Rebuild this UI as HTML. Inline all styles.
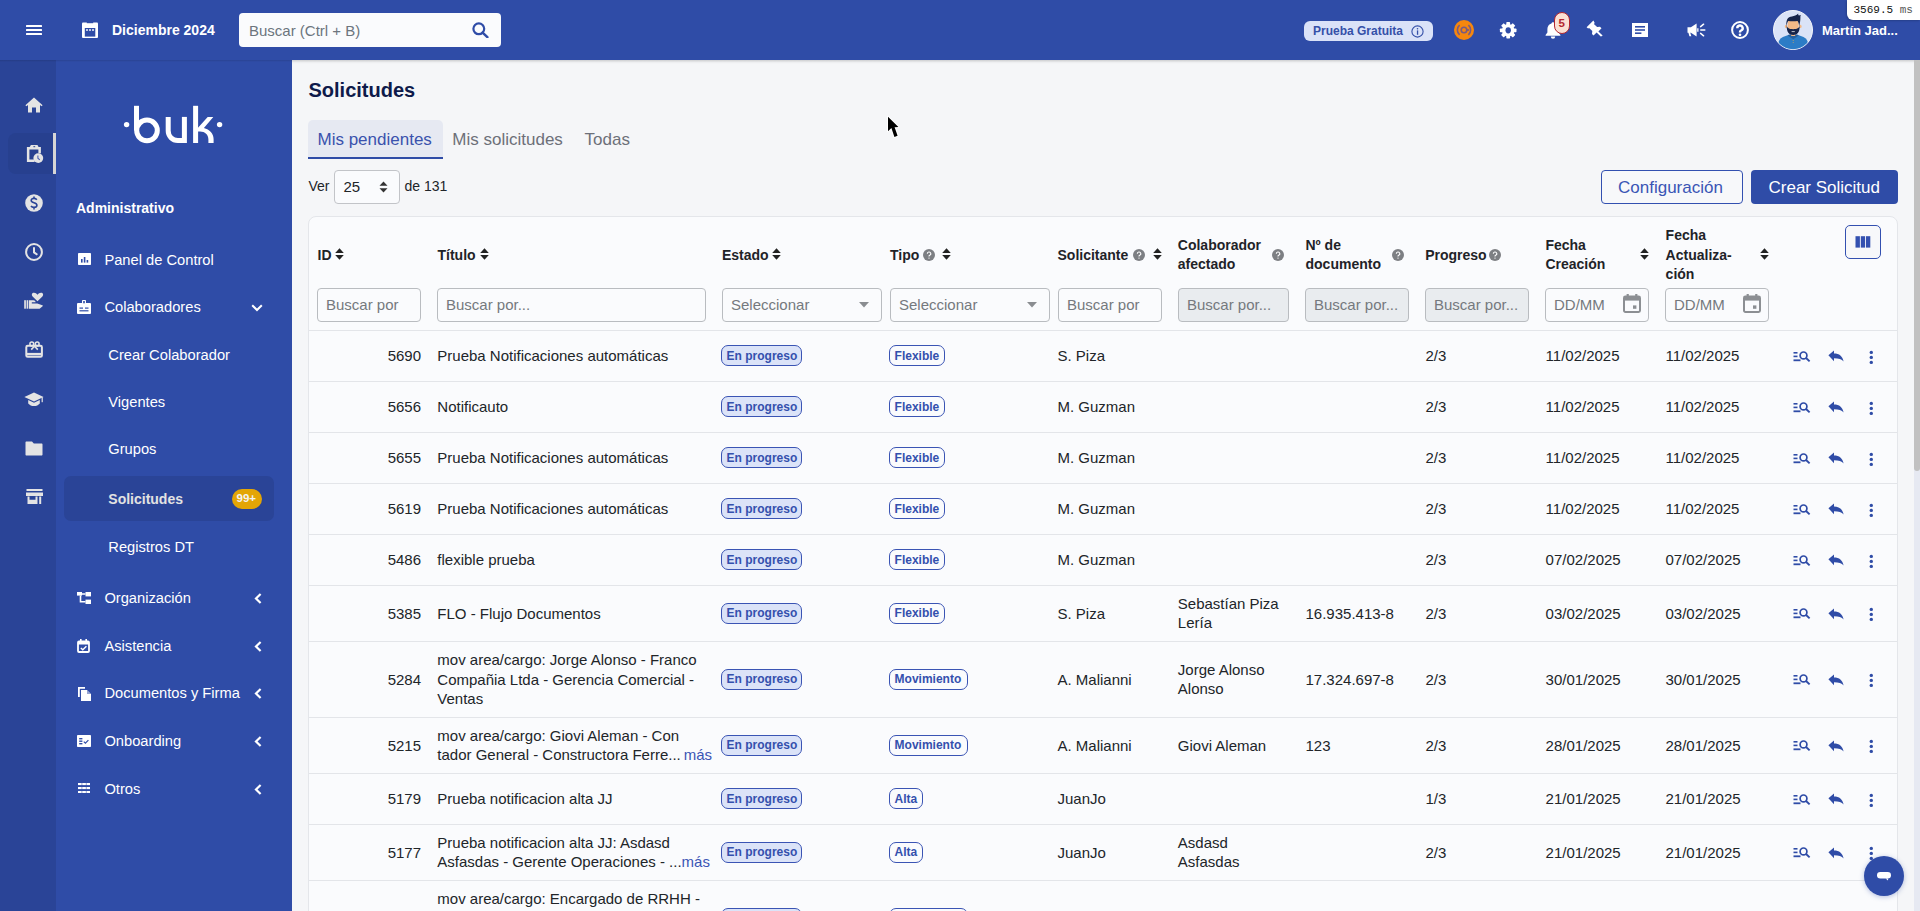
<!DOCTYPE html><html><head><meta charset="utf-8"><title>Solicitudes</title><style>
html,body{margin:0;padding:0;width:1920px;height:911px;overflow:hidden;background:#f5f6f8;font-family:"Liberation Sans",sans-serif;}
.t{position:absolute;white-space:nowrap;}
svg{display:block;}
</style></head><body>
<div style="position:absolute;left:0px;top:0px;width:1920px;height:60px;background:#2f4ca7;"></div>
<div style="position:absolute;left:0px;top:60px;width:56px;height:851px;background:#2a4497;"></div>
<div style="position:absolute;left:56px;top:60px;width:236px;height:851px;background:#2f4ca7;"></div>
<div style="position:absolute;left:0px;top:60px;width:292px;height:2px;background:linear-gradient(rgba(0,0,0,0.12),rgba(0,0,0,0));"></div>
<div style="position:absolute;left:292px;top:60px;width:1622px;height:4px;background:linear-gradient(rgba(0,0,0,0.16),rgba(0,0,0,0.03) 60%,rgba(0,0,0,0));"></div>
<svg style="position:absolute;left:26px;top:24px;" width="16" height="12" viewBox="0 0 16 12"><rect x="0" y="0.9" width="16" height="2.1" rx="0.5" fill="#fff"/><rect x="0" y="4.95" width="16" height="2.1" rx="0.5" fill="#fff"/><rect x="0" y="9" width="16" height="2.1" rx="0.5" fill="#fff"/></svg>
<svg style="position:absolute;left:82px;top:22px;" width="16" height="16" viewBox="0 0 16 16"><rect x="0" y="0.4" width="16" height="15.6" rx="1" fill="#fff"/><rect x="4.8" y="0" width="6.4" height="1.2" fill="#2f4ca7"/><rect x="2.8" y="6" width="10.5" height="8.6" fill="#2f4ca7"/><circle cx="5" cy="8" r="0.95" fill="#fff"/><circle cx="8" cy="8" r="0.95" fill="#fff"/><circle cx="11" cy="8" r="0.95" fill="#fff"/></svg>
<div class="t" style="left:112px;top:23.45px;font-size:14px;line-height:14px;font-weight:700;color:#fff;">Diciembre 2024</div>
<div style="position:absolute;left:239px;top:13px;width:262px;height:34px;background:#fafbfd;border-radius:4px;"></div>
<div class="t" style="left:249px;top:22.80px;font-size:15px;line-height:15px;font-weight:400;color:#6c757d;">Buscar (Ctrl + B)</div>
<svg style="position:absolute;left:472px;top:22px;" width="17" height="16" viewBox="0 0 17 16"><circle cx="6.8" cy="6.8" r="5.4" fill="none" stroke="#2f4ca7" stroke-width="2.2"/><path d="M10.6 10.6L15.4 15.2" stroke="#2f4ca7" stroke-width="2.4" stroke-linecap="round"/></svg>
<div style="position:absolute;left:1304px;top:21px;width:129px;height:20px;background:#dae2f8;border-radius:6px;"></div>
<div class="t" style="left:1313px;top:24.84px;font-size:12px;line-height:12px;font-weight:700;color:#3550a8;">Prueba Gratuita</div>
<svg style="position:absolute;left:1411px;top:25px;" width="13" height="13" viewBox="0 0 13 13"><circle cx="6.5" cy="6.5" r="5.6" fill="none" stroke="#3550a8" stroke-width="1.1"/><rect x="5.9" y="5.4" width="1.3" height="4.4" fill="#3550a8"/><circle cx="6.5" cy="3.7" r="0.8" fill="#3550a8"/></svg>
<svg style="position:absolute;left:1454px;top:20px;" width="20" height="20" viewBox="0 0 20 20"><circle cx="10" cy="10" r="10" fill="#f5870e"/><path d="M5.6 5.2A6.3 6.3 0 0 0 5.6 14.8" fill="none" stroke="#7a5a80" stroke-width="1.6"/><path d="M14.4 5.2A6.3 6.3 0 0 1 14.4 14.8" fill="none" stroke="#7a5a80" stroke-width="1.6"/><circle cx="10" cy="10" r="2.8" fill="none" stroke="#7a5a80" stroke-width="1.6"/><path d="M12.8 10H15" stroke="#7a5a80" stroke-width="1.6"/></svg>
<svg style="position:absolute;left:1499px;top:22px;" width="18" height="17" viewBox="0 0 18 17"><g transform="translate(9.2,8.3)"><rect x="-1.9" y="-8.3" width="3.8" height="4" rx="0.8" fill="#fff" transform="rotate(0)"/><rect x="-1.9" y="-8.3" width="3.8" height="4" rx="0.8" fill="#fff" transform="rotate(45)"/><rect x="-1.9" y="-8.3" width="3.8" height="4" rx="0.8" fill="#fff" transform="rotate(90)"/><rect x="-1.9" y="-8.3" width="3.8" height="4" rx="0.8" fill="#fff" transform="rotate(135)"/><rect x="-1.9" y="-8.3" width="3.8" height="4" rx="0.8" fill="#fff" transform="rotate(180)"/><rect x="-1.9" y="-8.3" width="3.8" height="4" rx="0.8" fill="#fff" transform="rotate(225)"/><rect x="-1.9" y="-8.3" width="3.8" height="4" rx="0.8" fill="#fff" transform="rotate(270)"/><rect x="-1.9" y="-8.3" width="3.8" height="4" rx="0.8" fill="#fff" transform="rotate(315)"/><circle r="6.2" fill="#fff"/><ellipse rx="2.7" ry="3.1" fill="#2f4ca7"/></g></svg>
<svg style="position:absolute;left:1545px;top:21px;" width="16" height="18" viewBox="0 0 16 18"><path d="M8 1.2c.9 0 1.5.6 1.5 1.3 2.6.6 4.1 2.8 4.1 5.6v3.4l1.8 2.4v.9H.6v-.9l1.8-2.4V8.1c0-2.8 1.5-5 4.1-5.6 0-.7.6-1.3 1.5-1.3z" fill="#fff"/><path d="M5.8 15.6h4.4a2.2 2.2 0 0 1-4.4 0z" fill="#fff"/></svg>
<div style="position:absolute;left:1554px;top:12px;width:16px;height:22px;background:#fbe0d4;border:1.3px solid #b3262f;border-radius:8px;box-sizing:border-box;"></div>
<div class="t" style="left:1558.5px;top:17.77px;font-size:11.5px;line-height:11.5px;font-weight:700;color:#b3262f;">5</div>
<svg style="position:absolute;left:1586px;top:20px;" width="17" height="17" viewBox="0 0 17 17"><g transform="translate(17,0) scale(-1,1)"><path d="M9.6 0.4L16.4 7.2 14.9 8.6 13.9 7.9 10.7 11.1 11 14 9.5 15.5 6.4 12.4 2.2 16.6 0.9 16.1 0.4 15.6 4.6 11.4 1.5 8.3 3 6.8 5.9 7.1 9.1 3.9 8.3 2.9z" fill="#fff"/></g></svg>
<svg style="position:absolute;left:1632px;top:23px;" width="16" height="14" viewBox="0 0 16 14"><rect x="0" y="0" width="16" height="14" fill="#fff"/><rect x="3" y="3" width="10" height="1.6" fill="#2f4ca7"/><rect x="3" y="6.2" width="10" height="1.6" fill="#2f4ca7"/><rect x="3" y="9.4" width="6.4" height="1.6" fill="#2f4ca7"/></svg>
<svg style="position:absolute;left:1687px;top:23px;" width="19" height="14" viewBox="0 0 19 14"><path d="M0.5 4.2h3.4L9.6 0.6v12.8L3.9 9.8H3.3l1 3.4H2.4l-1-3.4H.5z" fill="#fff"/><path d="M10.2 5.2h1.3v3.6h-1.3z" fill="#fff"/><path d="M13.6 3.6L16.6 1.2M13.8 7H17.8M13.6 10.4L16.6 12.8" stroke="#fff" stroke-width="1.5" stroke-linecap="round"/></svg>
<svg style="position:absolute;left:1731px;top:21px;" width="18" height="18" viewBox="0 0 18 18"><circle cx="9" cy="9" r="7.9" fill="none" stroke="#fff" stroke-width="2"/><path d="M6.3 7.2a2.7 2.6 0 1 1 3.8 2.3c-.8.4-1.1.8-1.1 1.6v.5" fill="none" stroke="#fff" stroke-width="2.4"/><circle cx="9" cy="13.8" r="1.35" fill="#fff"/></svg>
<svg style="position:absolute;left:1773px;top:10px;" width="40" height="40" viewBox="0 0 40 40"><defs><clipPath id="avc"><circle cx="20" cy="20" r="19.2"/></clipPath></defs><circle cx="20" cy="20" r="19.5" fill="#dae3f7" stroke="#f4f6fb" stroke-width="1"/><g clip-path="url(#avc)"><ellipse cx="20.2" cy="33" rx="14.6" ry="8.6" fill="#2c7cc6"/><path d="M14.6 25.6L20.2 29.2 25.8 25.6 24.4 24.4H16z" fill="#25609e"/><circle cx="20.2" cy="30.6" r="0.5" fill="#c9a35c"/><circle cx="20.2" cy="32.6" r="0.5" fill="#c9a35c"/><rect x="18.2" y="22.6" width="4" height="3.4" fill="#f3b987"/><ellipse cx="13" cy="16.4" rx="1.2" ry="1.6" fill="#f3b987"/><ellipse cx="27.4" cy="16.4" rx="1.2" ry="1.6" fill="#f3b987"/><rect x="14.6" y="9.4" width="11" height="11.5" rx="4" fill="#f3b987"/><path d="M13.6 15.6c0 6.8 2.4 9.4 6.6 9.4s6.6-2.6 6.6-9.4c-.8 2.8-2.6 3.6-6.6 3.6s-5.8-.8-6.6-3.6z" fill="#16244a"/><path d="M13.4 16.4C13 9.6 14.6 6.6 19 6.4c2.4-.6 4.4-1.2 6.2-3-.1 1 .2 1.6.8 2.2.8-.4 1.4-.5 2-.3-.6.6-.8 1.2-.6 2 .1 2.5-.4 5.6-1.2 9-.3-2.6-.8-4.4-1.6-5.4-3 .6-6.6.6-9.4 0-.8 1.2-1.5 3-1.8 5.5z" fill="#16244a"/><path d="M18.6 21.6h3.2" stroke="#e8e8e8" stroke-width="0.8"/></g></svg>
<div class="t" style="left:1822px;top:23.70px;font-size:13px;line-height:13px;font-weight:700;color:#fff;">Martín Jad...</div>
<div style="position:absolute;left:1847px;top:0px;width:73px;height:20px;background:#fff;border-bottom-left-radius:6px;box-shadow:-1px 1px 2px rgba(0,0,0,0.18);"></div>
<div class="t" style="left:1853.5px;top:4.99px;font-size:11px;line-height:11px;font-weight:400;color:#111;font-family:'Liberation Mono',monospace;">3569.5 <span style="color:#555">ms</span></div>
<div style="position:absolute;left:8px;top:133px;width:47px;height:41px;background:#27408f;border-radius:8px 0 0 8px;"></div>
<div style="position:absolute;left:53px;top:133px;width:3px;height:41px;background:#d6d6d6;"></div>
<svg style="position:absolute;left:25px;top:97px;" width="18" height="16" viewBox="0 0 18 16"><path d="M9 0.5L17.6 8.2 16.6 9.3 15 8v7.5H11v-5H7v5H3V8L1.4 9.3.4 8.2z" fill="#e4e4e4"/></svg>
<svg style="position:absolute;left:26px;top:144px;" width="20" height="20" viewBox="0 0 20 20"><path d="M13.65 9.2V4.15H2.15V16.75H8.6" fill="none" stroke="#e4e4e4" stroke-width="2.5"/><path d="M4.9 0.9H11.5L12.8 3.4V4.9H3.5V3.4z" fill="#e4e4e4"/><rect x="7.4" y="2.2" width="1.8" height="1" fill="#27408f"/><circle cx="12.3" cy="14.1" r="4.9" fill="#e4e4e4"/><path d="M11.9 11.4v2.8l1.9 1.7" fill="none" stroke="#4a5fb0" stroke-width="1.1"/></svg>
<svg style="position:absolute;left:25px;top:194px;" width="18" height="18" viewBox="0 0 18 18"><circle cx="9" cy="9" r="8.8" fill="#e4e4e4"/><path d="M11.8 5.7c-.6-.9-1.6-1.3-2.8-1.3-1.6 0-2.8.8-2.8 2.1 0 2.9 5.7 1.7 5.7 4.7 0 1.4-1.3 2.2-2.9 2.2-1.3 0-2.4-.5-3-1.4M9 2.6v2M9 13.4v2" fill="none" stroke="#2a4497" stroke-width="1.6"/></svg>
<svg style="position:absolute;left:25px;top:243px;" width="18" height="18" viewBox="0 0 18 18"><circle cx="9" cy="9" r="7.9" fill="none" stroke="#e4e4e4" stroke-width="2"/><path d="M9 4.3V9.4l3.4 2.4" fill="none" stroke="#e4e4e4" stroke-width="2"/></svg>
<svg style="position:absolute;left:20px;top:288px;" width="28" height="74" viewBox="0 0 28 74"><path d="M17.5 13.2L12.6 8.4C11.2 6.9 11.9 4.8 14 4.8 15.4 4.8 16.7 5.6 17.5 6.7 18.3 5.6 19.6 4.8 21 4.8 23.1 4.8 23.8 6.9 22.4 8.4Z" fill="#e4e4e4"/><rect x="4.2" y="12.2" width="1.7" height="8.5" fill="#e4e4e4"/><rect x="6.6" y="12.2" width="1.6" height="8.5" fill="#e4e4e4"/><path d="M8.9 12.2H13.4C14.6 12.2 15.6 13 15.6 14.2H11.8V15.5H17.3L21.6 16.9C22.6 17.2 23.2 17.7 22.9 18.1L19.6 20.7H8.9Z" fill="#e4e4e4"/><rect x="6.3" y="57.8" width="15.6" height="11" rx="1.4" fill="none" stroke="#e4e4e4" stroke-width="2"/><rect x="6.3" y="64.9" width="15.6" height="2.4" fill="#e4e4e4"/><circle cx="11.8" cy="56" r="1.9" fill="none" stroke="#e4e4e4" stroke-width="1.5"/><circle cx="17.2" cy="56" r="1.9" fill="none" stroke="#e4e4e4" stroke-width="1.5"/><path d="M14.5 58.2L11.2 61.6M14.5 58.2L17.8 61.6" stroke="#e4e4e4" stroke-width="1.6"/></svg>
<svg style="position:absolute;left:24px;top:392px;" width="20" height="15" viewBox="0 0 20 15"><path d="M10 0.4L19.6 5 10 9.6.4 5z" fill="#e4e4e4"/><path d="M4.2 8v3.4c1.4 1.6 3.4 2.6 5.8 2.6s4.4-1 5.8-2.6V8L10 10.8z" fill="#e4e4e4"/><rect x="17.6" y="5.2" width="1.2" height="5" fill="#e4e4e4"/></svg>
<svg style="position:absolute;left:25px;top:441px;" width="18" height="15" viewBox="0 0 18 15"><path d="M1.5 0.5h5.5l1.8 2H16.5c.6 0 1 .4 1 1V13.5c0 .6-.4 1-1 1h-15c-.6 0-1-.4-1-1v-12c0-.6.4-1 1-1z" fill="#e4e4e4"/></svg>
<svg style="position:absolute;left:26px;top:489px;" width="17" height="15" viewBox="0 0 17 15"><rect x="0.5" y="0" width="16" height="2" fill="#e4e4e4"/><path d="M0 3.5h17L17 7H0z" fill="#e4e4e4"/><path d="M1.5 7.5h2v3.2h6V7.5h2v7.5H1.5z" fill="#e4e4e4"/><rect x="13.2" y="7.5" width="2" height="7.5" fill="#e4e4e4"/></svg>
<svg style="position:absolute;left:110px;top:90px;" width="130" height="70" viewBox="0 0 130 70"><g transform="translate(-110,-90)" fill="none" stroke="#fff" stroke-width="5"><circle cx="126.6" cy="124.6" r="2.7" fill="#fff" stroke="none"/><circle cx="219.6" cy="124.6" r="2.7" fill="#fff" stroke="none"/><path d="M136.5 105.8V130.5"/><circle cx="147" cy="130.4" r="10.3"/><path d="M168.2 116.9V130.8A9.6 9.6 0 0 0 177.8 140.5H184.4"/><path d="M184.4 116.9V143"/><path d="M195.6 105.8V143"/><path d="M198 127.7L207.7 116.9H213.3L203.9 127.9C209.6 129.3 213.6 133.4 213.6 139V143H208.4V139.6C208.4 134.6 205 131.6 200 131.6H198Z" fill="#fff" stroke="none"/></g></svg>
<div class="t" style="left:76px;top:201.05px;font-size:14px;line-height:14px;font-weight:700;color:#fff;">Administrativo</div>
<svg style="position:absolute;left:78px;top:253px;" width="13" height="12" viewBox="0 0 13 12"><rect x="0" y="0" width="13" height="12" rx="0.8" fill="#fff"/><rect x="3" y="6" width="1.6" height="3.6" fill="#2f4ca7"/><rect x="5.8" y="4" width="1.6" height="5.6" fill="#2f4ca7"/><rect x="8.6" y="7" width="1.6" height="2.6" fill="#2f4ca7"/></svg>
<div class="t" style="left:104.4px;top:252.56px;font-size:14.7px;line-height:14.7px;font-weight:400;color:#ffffff;">Panel de Control</div>
<svg style="position:absolute;left:77px;top:300px;" width="14" height="14" viewBox="0 0 14 14"><rect x="0" y="3" width="14" height="11" rx="1" fill="#fff"/><rect x="5" y="0" width="4" height="4.5" rx="0.8" fill="#fff"/><rect x="6.2" y="1" width="1.6" height="2.3" fill="#2f4ca7"/><rect x="2.5" y="7.5" width="3.5" height="1.2" fill="#2f4ca7"/><rect x="8" y="7.5" width="3.5" height="1.2" fill="#2f4ca7"/><rect x="2.5" y="10.2" width="9" height="1.2" fill="#2f4ca7"/></svg>
<div class="t" style="left:104.4px;top:299.56px;font-size:14.7px;line-height:14.7px;font-weight:400;color:#ffffff;">Colaboradores</div>
<svg style="position:absolute;left:251px;top:304px;" width="12" height="8" viewBox="0 0 12 8"><path d="M1.2 1.2L6 6 10.8 1.2" fill="none" stroke="#fff" stroke-width="2"/></svg>
<div class="t" style="left:108.3px;top:347.56px;font-size:14.7px;line-height:14.7px;font-weight:400;color:#ffffff;">Crear Colaborador</div>
<div class="t" style="left:108.3px;top:394.56px;font-size:14.7px;line-height:14.7px;font-weight:400;color:#ffffff;">Vigentes</div>
<div class="t" style="left:108.3px;top:442.06px;font-size:14.7px;line-height:14.7px;font-weight:400;color:#ffffff;">Grupos</div>
<div style="position:absolute;left:64px;top:476px;width:210px;height:45px;background:#2a4497;border-radius:7px;"></div>
<div class="t" style="left:108.3px;top:491.55px;font-size:14px;line-height:14px;font-weight:700;color:#e2e2e2;">Solicitudes</div>
<div style="position:absolute;left:232px;top:489px;width:30px;height:20px;background:#e3a506;border-radius:10px;"></div>
<div class="t" style="left:236.5px;top:493.27px;font-size:11.5px;line-height:11.5px;font-weight:700;color:#f4f4f4;">99+</div>
<div class="t" style="left:108.3px;top:539.96px;font-size:14.7px;line-height:14.7px;font-weight:400;color:#ffffff;">Registros DT</div>
<svg style="position:absolute;left:77px;top:592px;" width="14" height="12" viewBox="0 0 14 12"><rect x="0" y="0" width="5" height="3.6" fill="#fff"/><rect x="8.5" y="0" width="5.5" height="4.4" fill="#fff"/><rect x="8.5" y="7.6" width="5.5" height="4.4" fill="#fff"/><path d="M3.5 3.6V9.8H8.5M3.5 2H8.5" fill="none" stroke="#fff" stroke-width="1.6"/></svg>
<div class="t" style="left:104.4px;top:590.96px;font-size:14.7px;line-height:14.7px;font-weight:400;color:#ffffff;">Organización</div>
<svg style="position:absolute;left:254px;top:593px;" width="8" height="11" viewBox="0 0 8 11"><path d="M6.6 1L2 5.5 6.6 10" fill="none" stroke="#fff" stroke-width="2.2"/></svg>
<svg style="position:absolute;left:77px;top:639px;" width="13" height="14" viewBox="0 0 13 14"><rect x="1" y="2.5" width="11" height="10.5" rx="1" fill="none" stroke="#fff" stroke-width="1.8"/><rect x="1" y="2.5" width="11" height="3" fill="#fff"/><rect x="3" y="0" width="1.6" height="3" fill="#fff"/><rect x="8.4" y="0" width="1.6" height="3" fill="#fff"/><path d="M3.8 9l2 1.8 3.6-3.6" fill="none" stroke="#fff" stroke-width="1.4"/></svg>
<div class="t" style="left:104.4px;top:639.16px;font-size:14.7px;line-height:14.7px;font-weight:400;color:#ffffff;">Asistencia</div>
<svg style="position:absolute;left:254px;top:641px;" width="8" height="11" viewBox="0 0 8 11"><path d="M6.6 1L2 5.5 6.6 10" fill="none" stroke="#fff" stroke-width="2.2"/></svg>
<svg style="position:absolute;left:77px;top:686px;" width="14" height="15" viewBox="0 0 14 15"><path d="M1 1h7v1.8H2.8V11H1z" fill="#fff"/><path d="M4 4h6l4 4v7H4z" fill="#fff"/><path d="M10 4v4h4" fill="#2f4ca7" opacity="0.5"/></svg>
<div class="t" style="left:104.4px;top:686.06px;font-size:14.7px;line-height:14.7px;font-weight:400;color:#ffffff;">Documentos y Firma</div>
<svg style="position:absolute;left:254px;top:688px;" width="8" height="11" viewBox="0 0 8 11"><path d="M6.6 1L2 5.5 6.6 10" fill="none" stroke="#fff" stroke-width="2.2"/></svg>
<svg style="position:absolute;left:77px;top:735px;" width="14" height="12" viewBox="0 0 14 12"><rect x="0" y="0" width="14" height="12" rx="0.8" fill="#fff"/><rect x="2.2" y="3" width="3.2" height="1.4" fill="#2f4ca7"/><rect x="2.2" y="5.5" width="3.2" height="1.4" fill="#2f4ca7"/><rect x="2.2" y="8" width="3.2" height="1.4" fill="#2f4ca7"/><path d="M6.8 6.6l1.6 1.5 3-3" fill="none" stroke="#2f4ca7" stroke-width="1.2"/></svg>
<div class="t" style="left:104.4px;top:733.56px;font-size:14.7px;line-height:14.7px;font-weight:400;color:#ffffff;">Onboarding</div>
<svg style="position:absolute;left:254px;top:736px;" width="8" height="11" viewBox="0 0 8 11"><path d="M6.6 1L2 5.5 6.6 10" fill="none" stroke="#fff" stroke-width="2.2"/></svg>
<svg style="position:absolute;left:78px;top:783px;" width="12" height="10" viewBox="0 0 12 10"><rect x="0.0" y="0.0" width="3.7" height="2.1" fill="#fff"/><rect x="4.2" y="0.0" width="3.7" height="2.1" fill="#fff"/><rect x="8.4" y="0.0" width="3.7" height="2.1" fill="#fff"/><rect x="0.0" y="4.0" width="3.7" height="2.1" fill="#fff"/><rect x="4.2" y="4.0" width="3.7" height="2.1" fill="#fff"/><rect x="8.4" y="4.0" width="3.7" height="2.1" fill="#fff"/><rect x="0.0" y="8.0" width="3.7" height="2.1" fill="#fff"/><rect x="4.2" y="8.0" width="3.7" height="2.1" fill="#fff"/><rect x="8.4" y="8.0" width="3.7" height="2.1" fill="#fff"/></svg>
<div class="t" style="left:104.4px;top:781.96px;font-size:14.7px;line-height:14.7px;font-weight:400;color:#ffffff;">Otros</div>
<svg style="position:absolute;left:254px;top:784px;" width="8" height="11" viewBox="0 0 8 11"><path d="M6.6 1L2 5.5 6.6 10" fill="none" stroke="#fff" stroke-width="2.2"/></svg>
<div class="t" style="left:308.5px;top:80.07px;font-size:20px;line-height:20px;font-weight:700;color:#0e1a4a;">Solicitudes</div>
<div style="position:absolute;left:308px;top:120px;width:135px;height:37px;background:#e6e9f2;border-radius:5px 5px 0 0;"></div>
<div style="position:absolute;left:308px;top:157px;width:135px;height:2px;background:#2f4ca7;"></div>
<div class="t" style="left:317.5px;top:130.91px;font-size:17px;line-height:17px;font-weight:400;color:#3a52ad;">Mis pendientes</div>
<div class="t" style="left:452.3px;top:130.91px;font-size:17px;line-height:17px;font-weight:400;color:#6d7079;">Mis solicitudes</div>
<div class="t" style="left:584.6px;top:130.91px;font-size:17px;line-height:17px;font-weight:400;color:#6d7079;">Todas</div>
<div class="t" style="left:308.5px;top:179.15px;font-size:14px;line-height:14px;font-weight:400;color:#212529;">Ver</div>
<div style="position:absolute;left:334px;top:170px;width:66px;height:34px;background:#fafbfd;border:1px solid #c2c4c8;border-radius:4px;box-sizing:border-box;"></div>
<div class="t" style="left:343.5px;top:179.30px;font-size:15px;line-height:15px;font-weight:400;color:#212529;">25</div>
<svg style="position:absolute;left:379px;top:181px;" width="9" height="12" viewBox="0 0 9 12"><path d="M4.5 0.5L8.5 4.8H.5z M4.5 11.5L8.5 7.2H.5z" fill="#333"/></svg>
<div class="t" style="left:404.5px;top:179.15px;font-size:14px;line-height:14px;font-weight:400;color:#212529;">de 131</div>
<div style="position:absolute;left:1601px;top:170px;width:142px;height:34px;border:1px solid #3350b0;border-radius:4px;box-sizing:border-box;background:#f7f8fa;"></div>
<div class="t" style="left:1618px;top:179.21px;font-size:17px;line-height:17px;font-weight:400;color:#3a55b5;">Configuración</div>
<div style="position:absolute;left:1751px;top:170px;width:147px;height:34px;background:#2f4ca7;border-radius:4px;"></div>
<div class="t" style="left:1768.5px;top:179.21px;font-size:17px;line-height:17px;font-weight:400;color:#fff;">Crear Solicitud</div>
<div style="position:absolute;left:308px;top:216px;width:1590px;height:760px;background:#fafbfd;border:1px solid #e4e6ea;border-radius:8px;box-sizing:border-box;"></div>
<div style="position:absolute;left:1845px;top:225px;width:36px;height:34px;border:1px solid #3350b0;border-radius:5px;box-sizing:border-box;background:#f7f8fa;"></div>
<svg style="position:absolute;left:1855px;top:236px;" width="16" height="12" viewBox="0 0 16 12"><rect x="0.5" y="0.2" width="4.4" height="11.4" fill="#3350b0"/><rect x="5.8" y="0.2" width="4.2" height="11.4" fill="#3350b0"/><rect x="10.9" y="0.2" width="4.4" height="11.4" fill="#3350b0"/></svg>
<div class="t" style="left:317.5px;top:248.15px;font-size:14px;line-height:14px;font-weight:700;color:#1f2328;">ID</div>
<svg style="position:absolute;left:334.5px;top:248px;" width="9" height="12" viewBox="0 0 9 12"><path d="M4.5 0.3L8.8 5H.2z M4.5 11.7L8.8 7H.2z" fill="#222"/></svg>
<div class="t" style="left:437.5px;top:248.15px;font-size:14px;line-height:14px;font-weight:700;color:#1f2328;">Título</div>
<svg style="position:absolute;left:479.5px;top:248px;" width="9" height="12" viewBox="0 0 9 12"><path d="M4.5 0.3L8.8 5H.2z M4.5 11.7L8.8 7H.2z" fill="#222"/></svg>
<div class="t" style="left:722px;top:248.15px;font-size:14px;line-height:14px;font-weight:700;color:#1f2328;">Estado</div>
<svg style="position:absolute;left:772px;top:248px;" width="9" height="12" viewBox="0 0 9 12"><path d="M4.5 0.3L8.8 5H.2z M4.5 11.7L8.8 7H.2z" fill="#222"/></svg>
<div class="t" style="left:890px;top:248.15px;font-size:14px;line-height:14px;font-weight:700;color:#1f2328;">Tipo</div>
<svg style="position:absolute;left:922.5px;top:248.7px;" width="12" height="12" viewBox="0 0 12 12"><circle cx="6" cy="6" r="6" fill="#7d7f83"/><path d="M4.3 4.7a1.75 1.7 0 1 1 2.4 1.6c-.5.2-.7.5-.7 1v.3" fill="none" stroke="#fff" stroke-width="1.1"/><circle cx="6" cy="9.1" r="0.7" fill="#fff"/></svg>
<svg style="position:absolute;left:942px;top:248px;" width="9" height="12" viewBox="0 0 9 12"><path d="M4.5 0.3L8.8 5H.2z M4.5 11.7L8.8 7H.2z" fill="#222"/></svg>
<div class="t" style="left:1057.5px;top:248.15px;font-size:14px;line-height:14px;font-weight:700;color:#1f2328;">Solicitante</div>
<svg style="position:absolute;left:1132.5px;top:248.7px;" width="12" height="12" viewBox="0 0 12 12"><circle cx="6" cy="6" r="6" fill="#7d7f83"/><path d="M4.3 4.7a1.75 1.7 0 1 1 2.4 1.6c-.5.2-.7.5-.7 1v.3" fill="none" stroke="#fff" stroke-width="1.1"/><circle cx="6" cy="9.1" r="0.7" fill="#fff"/></svg>
<svg style="position:absolute;left:1152.5px;top:248px;" width="9" height="12" viewBox="0 0 9 12"><path d="M4.5 0.3L8.8 5H.2z M4.5 11.7L8.8 7H.2z" fill="#222"/></svg>
<div class="t" style="left:1177.8px;top:238.15px;font-size:14px;line-height:14px;font-weight:700;color:#1f2328;">Colaborador</div>
<div class="t" style="left:1177.8px;top:256.65px;font-size:14px;line-height:14px;font-weight:700;color:#1f2328;">afectado</div>
<svg style="position:absolute;left:1271.5px;top:248.89999999999998px;" width="12" height="12" viewBox="0 0 12 12"><circle cx="6" cy="6" r="6" fill="#7d7f83"/><path d="M4.3 4.7a1.75 1.7 0 1 1 2.4 1.6c-.5.2-.7.5-.7 1v.3" fill="none" stroke="#fff" stroke-width="1.1"/><circle cx="6" cy="9.1" r="0.7" fill="#fff"/></svg>
<div class="t" style="left:1305.5px;top:238.15px;font-size:14px;line-height:14px;font-weight:700;color:#1f2328;">Nº de</div>
<div class="t" style="left:1305.5px;top:256.65px;font-size:14px;line-height:14px;font-weight:700;color:#1f2328;">documento</div>
<svg style="position:absolute;left:1391.5px;top:248.89999999999998px;" width="12" height="12" viewBox="0 0 12 12"><circle cx="6" cy="6" r="6" fill="#7d7f83"/><path d="M4.3 4.7a1.75 1.7 0 1 1 2.4 1.6c-.5.2-.7.5-.7 1v.3" fill="none" stroke="#fff" stroke-width="1.1"/><circle cx="6" cy="9.1" r="0.7" fill="#fff"/></svg>
<div class="t" style="left:1425.2px;top:248.15px;font-size:14px;line-height:14px;font-weight:700;color:#1f2328;">Progreso</div>
<svg style="position:absolute;left:1488.5px;top:248.7px;" width="12" height="12" viewBox="0 0 12 12"><circle cx="6" cy="6" r="6" fill="#7d7f83"/><path d="M4.3 4.7a1.75 1.7 0 1 1 2.4 1.6c-.5.2-.7.5-.7 1v.3" fill="none" stroke="#fff" stroke-width="1.1"/><circle cx="6" cy="9.1" r="0.7" fill="#fff"/></svg>
<div class="t" style="left:1545.4px;top:238.15px;font-size:14px;line-height:14px;font-weight:700;color:#1f2328;">Fecha</div>
<div class="t" style="left:1545.4px;top:256.95px;font-size:14px;line-height:14px;font-weight:700;color:#1f2328;">Creación</div>
<svg style="position:absolute;left:1640px;top:248px;" width="9" height="12" viewBox="0 0 9 12"><path d="M4.5 0.3L8.8 5H.2z M4.5 11.7L8.8 7H.2z" fill="#222"/></svg>
<div class="t" style="left:1665.6px;top:228.35px;font-size:14px;line-height:14px;font-weight:700;color:#1f2328;">Fecha</div>
<div class="t" style="left:1665.6px;top:248.15px;font-size:14px;line-height:14px;font-weight:700;color:#1f2328;">Actualiza-</div>
<div class="t" style="left:1665.6px;top:266.85px;font-size:14px;line-height:14px;font-weight:700;color:#1f2328;">ción</div>
<svg style="position:absolute;left:1760px;top:248px;" width="9" height="12" viewBox="0 0 9 12"><path d="M4.5 0.3L8.8 5H.2z M4.5 11.7L8.8 7H.2z" fill="#222"/></svg>
<div style="position:absolute;left:317px;top:288px;width:104px;height:34px;background:#fafbfd;border:1px solid #b9bcc0;border-radius:4px;box-sizing:border-box;"></div>
<div class="t" style="left:326px;top:296.70px;font-size:15px;line-height:15px;font-weight:400;color:#75797e;">Buscar por</div>
<div style="position:absolute;left:437px;top:288px;width:269px;height:34px;background:#fafbfd;border:1px solid #b9bcc0;border-radius:4px;box-sizing:border-box;"></div>
<div class="t" style="left:446px;top:296.70px;font-size:15px;line-height:15px;font-weight:400;color:#75797e;">Buscar por...</div>
<div style="position:absolute;left:722px;top:288px;width:160px;height:34px;background:#fafbfd;border:1px solid #b9bcc0;border-radius:4px;box-sizing:border-box;"></div>
<div class="t" style="left:731px;top:296.70px;font-size:15px;line-height:15px;font-weight:400;color:#75797e;">Seleccionar</div>
<svg style="position:absolute;left:859px;top:302px;" width="10" height="6" viewBox="0 0 10 6"><path d="M0 0h10L5 5.5z" fill="#8a8d91"/></svg>
<div style="position:absolute;left:890px;top:288px;width:160px;height:34px;background:#fafbfd;border:1px solid #b9bcc0;border-radius:4px;box-sizing:border-box;"></div>
<div class="t" style="left:899px;top:296.70px;font-size:15px;line-height:15px;font-weight:400;color:#75797e;">Seleccionar</div>
<svg style="position:absolute;left:1027px;top:302px;" width="10" height="6" viewBox="0 0 10 6"><path d="M0 0h10L5 5.5z" fill="#8a8d91"/></svg>
<div style="position:absolute;left:1058px;top:288px;width:104px;height:34px;background:#fafbfd;border:1px solid #b9bcc0;border-radius:4px;box-sizing:border-box;"></div>
<div class="t" style="left:1067px;top:296.70px;font-size:15px;line-height:15px;font-weight:400;color:#75797e;">Buscar por</div>
<div style="position:absolute;left:1178px;top:288px;width:111px;height:34px;background:#e9ecef;border:1px solid #b9bcc0;border-radius:4px;box-sizing:border-box;"></div>
<div class="t" style="left:1187px;top:296.70px;font-size:15px;line-height:15px;font-weight:400;color:#75797e;">Buscar por...</div>
<div style="position:absolute;left:1305px;top:288px;width:104px;height:34px;background:#e9ecef;border:1px solid #b9bcc0;border-radius:4px;box-sizing:border-box;"></div>
<div class="t" style="left:1314px;top:296.70px;font-size:15px;line-height:15px;font-weight:400;color:#75797e;">Buscar por...</div>
<div style="position:absolute;left:1425px;top:288px;width:104px;height:34px;background:#e9ecef;border:1px solid #b9bcc0;border-radius:4px;box-sizing:border-box;"></div>
<div class="t" style="left:1434px;top:296.70px;font-size:15px;line-height:15px;font-weight:400;color:#75797e;">Buscar por...</div>
<div style="position:absolute;left:1545px;top:288px;width:104px;height:34px;background:#fafbfd;border:1px solid #b9bcc0;border-radius:4px;box-sizing:border-box;"></div>
<div class="t" style="left:1554px;top:296.70px;font-size:15px;line-height:15px;font-weight:400;color:#75797e;">DD/MM</div>
<div style="position:absolute;left:1665px;top:288px;width:104px;height:34px;background:#fafbfd;border:1px solid #b9bcc0;border-radius:4px;box-sizing:border-box;"></div>
<div class="t" style="left:1674px;top:296.70px;font-size:15px;line-height:15px;font-weight:400;color:#75797e;">DD/MM</div>
<svg style="position:absolute;left:1623px;top:294px;" width="18" height="19" viewBox="0 0 18 19"><rect x="1" y="2.6" width="16" height="15.4" rx="1.4" fill="none" stroke="#8c8f93" stroke-width="2"/><rect x="1" y="2.6" width="16" height="4" fill="#8c8f93"/><rect x="3.6" y="0" width="2.2" height="3.4" fill="#8c8f93"/><rect x="12.2" y="0" width="2.2" height="3.4" fill="#8c8f93"/><rect x="10" y="11.4" width="3.4" height="3.4" fill="#8c8f93"/></svg>
<svg style="position:absolute;left:1743px;top:294px;" width="18" height="19" viewBox="0 0 18 19"><rect x="1" y="2.6" width="16" height="15.4" rx="1.4" fill="none" stroke="#8c8f93" stroke-width="2"/><rect x="1" y="2.6" width="16" height="4" fill="#8c8f93"/><rect x="3.6" y="0" width="2.2" height="3.4" fill="#8c8f93"/><rect x="12.2" y="0" width="2.2" height="3.4" fill="#8c8f93"/><rect x="10" y="11.4" width="3.4" height="3.4" fill="#8c8f93"/></svg>
<div style="position:absolute;left:309px;top:330px;width:1588px;height:1px;background:#e3e5e9;"></div>
<div class="t" style="right:1499px;top:348.00px;font-size:15px;line-height:15px;font-weight:400;color:#212529;text-align:right;">5690</div>
<div class="t" style="left:437.3px;top:348.00px;font-size:15px;line-height:15px;font-weight:400;color:#212529;">Prueba Notificaciones automáticas</div>
<div style="position:absolute;left:721px;top:345.0px;width:81px;height:21px;background:#dbe3f8;border:1px solid #3a54b4;border-radius:7px;box-sizing:border-box;"></div>
<div class="t" style="left:726.6px;top:349.54px;font-size:12px;line-height:12px;font-weight:700;color:#3450ad;">En progreso</div>
<div style="position:absolute;left:889px;top:345.0px;width:56px;height:21px;background:#fafbfd;border:1px solid #3a54b4;border-radius:7px;box-sizing:border-box;"></div>
<div class="t" style="left:894.6px;top:349.54px;font-size:12px;line-height:12px;font-weight:700;color:#3450ad;">Flexible</div>
<div class="t" style="left:1057.5px;top:348.00px;font-size:15px;line-height:15px;font-weight:400;color:#212529;">S. Piza</div>
<div class="t" style="left:1425.5px;top:348.00px;font-size:15px;line-height:15px;font-weight:400;color:#212529;">2/3</div>
<div class="t" style="left:1545.6px;top:348.00px;font-size:15px;line-height:15px;font-weight:400;color:#212529;">11/02/2025</div>
<div class="t" style="left:1665.5px;top:348.00px;font-size:15px;line-height:15px;font-weight:400;color:#212529;">11/02/2025</div>
<svg style="position:absolute;left:1793px;top:350.5px;" width="18" height="12" viewBox="0 0 18 12"><rect x="0.5" y="1" width="4" height="1.6" fill="#2f4ca7"/><rect x="0.5" y="4.6" width="4" height="1.6" fill="#2f4ca7"/><rect x="0.5" y="8.4" width="7" height="1.8" fill="#2f4ca7"/><circle cx="10.5" cy="4.4" r="3.4" fill="none" stroke="#2f4ca7" stroke-width="1.7"/><path d="M12.8 6.8L16.6 10.4" stroke="#2f4ca7" stroke-width="1.9"/></svg>
<svg style="position:absolute;left:1828px;top:350.0px;" width="16" height="12" viewBox="0 0 16 12"><path d="M0.4 5.2L6 0.4v3c5.2 0 8.6 2.6 9.6 8.2-1.8-2.6-4.8-3.4-9.6-3.4v3z" fill="#2f4ca7"/></svg>
<svg style="position:absolute;left:1869px;top:349.5px;" width="5" height="15" viewBox="0 0 5 15"><circle cx="2.3" cy="2.4" r="1.7" fill="#2f4ca7"/><circle cx="2.3" cy="7.4" r="1.7" fill="#2f4ca7"/><circle cx="2.3" cy="12.4" r="1.7" fill="#2f4ca7"/></svg>
<div style="position:absolute;left:309px;top:381px;width:1588px;height:1px;background:#e3e5e9;"></div>
<div class="t" style="right:1499px;top:399.00px;font-size:15px;line-height:15px;font-weight:400;color:#212529;text-align:right;">5656</div>
<div class="t" style="left:437.3px;top:399.00px;font-size:15px;line-height:15px;font-weight:400;color:#212529;">Notificauto</div>
<div style="position:absolute;left:721px;top:396.0px;width:81px;height:21px;background:#dbe3f8;border:1px solid #3a54b4;border-radius:7px;box-sizing:border-box;"></div>
<div class="t" style="left:726.6px;top:400.54px;font-size:12px;line-height:12px;font-weight:700;color:#3450ad;">En progreso</div>
<div style="position:absolute;left:889px;top:396.0px;width:56px;height:21px;background:#fafbfd;border:1px solid #3a54b4;border-radius:7px;box-sizing:border-box;"></div>
<div class="t" style="left:894.6px;top:400.54px;font-size:12px;line-height:12px;font-weight:700;color:#3450ad;">Flexible</div>
<div class="t" style="left:1057.5px;top:399.00px;font-size:15px;line-height:15px;font-weight:400;color:#212529;">M. Guzman</div>
<div class="t" style="left:1425.5px;top:399.00px;font-size:15px;line-height:15px;font-weight:400;color:#212529;">2/3</div>
<div class="t" style="left:1545.6px;top:399.00px;font-size:15px;line-height:15px;font-weight:400;color:#212529;">11/02/2025</div>
<div class="t" style="left:1665.5px;top:399.00px;font-size:15px;line-height:15px;font-weight:400;color:#212529;">11/02/2025</div>
<svg style="position:absolute;left:1793px;top:401.5px;" width="18" height="12" viewBox="0 0 18 12"><rect x="0.5" y="1" width="4" height="1.6" fill="#2f4ca7"/><rect x="0.5" y="4.6" width="4" height="1.6" fill="#2f4ca7"/><rect x="0.5" y="8.4" width="7" height="1.8" fill="#2f4ca7"/><circle cx="10.5" cy="4.4" r="3.4" fill="none" stroke="#2f4ca7" stroke-width="1.7"/><path d="M12.8 6.8L16.6 10.4" stroke="#2f4ca7" stroke-width="1.9"/></svg>
<svg style="position:absolute;left:1828px;top:401.0px;" width="16" height="12" viewBox="0 0 16 12"><path d="M0.4 5.2L6 0.4v3c5.2 0 8.6 2.6 9.6 8.2-1.8-2.6-4.8-3.4-9.6-3.4v3z" fill="#2f4ca7"/></svg>
<svg style="position:absolute;left:1869px;top:400.5px;" width="5" height="15" viewBox="0 0 5 15"><circle cx="2.3" cy="2.4" r="1.7" fill="#2f4ca7"/><circle cx="2.3" cy="7.4" r="1.7" fill="#2f4ca7"/><circle cx="2.3" cy="12.4" r="1.7" fill="#2f4ca7"/></svg>
<div style="position:absolute;left:309px;top:432px;width:1588px;height:1px;background:#e3e5e9;"></div>
<div class="t" style="right:1499px;top:450.00px;font-size:15px;line-height:15px;font-weight:400;color:#212529;text-align:right;">5655</div>
<div class="t" style="left:437.3px;top:450.00px;font-size:15px;line-height:15px;font-weight:400;color:#212529;">Prueba Notificaciones automáticas</div>
<div style="position:absolute;left:721px;top:447.0px;width:81px;height:21px;background:#dbe3f8;border:1px solid #3a54b4;border-radius:7px;box-sizing:border-box;"></div>
<div class="t" style="left:726.6px;top:451.54px;font-size:12px;line-height:12px;font-weight:700;color:#3450ad;">En progreso</div>
<div style="position:absolute;left:889px;top:447.0px;width:56px;height:21px;background:#fafbfd;border:1px solid #3a54b4;border-radius:7px;box-sizing:border-box;"></div>
<div class="t" style="left:894.6px;top:451.54px;font-size:12px;line-height:12px;font-weight:700;color:#3450ad;">Flexible</div>
<div class="t" style="left:1057.5px;top:450.00px;font-size:15px;line-height:15px;font-weight:400;color:#212529;">M. Guzman</div>
<div class="t" style="left:1425.5px;top:450.00px;font-size:15px;line-height:15px;font-weight:400;color:#212529;">2/3</div>
<div class="t" style="left:1545.6px;top:450.00px;font-size:15px;line-height:15px;font-weight:400;color:#212529;">11/02/2025</div>
<div class="t" style="left:1665.5px;top:450.00px;font-size:15px;line-height:15px;font-weight:400;color:#212529;">11/02/2025</div>
<svg style="position:absolute;left:1793px;top:452.5px;" width="18" height="12" viewBox="0 0 18 12"><rect x="0.5" y="1" width="4" height="1.6" fill="#2f4ca7"/><rect x="0.5" y="4.6" width="4" height="1.6" fill="#2f4ca7"/><rect x="0.5" y="8.4" width="7" height="1.8" fill="#2f4ca7"/><circle cx="10.5" cy="4.4" r="3.4" fill="none" stroke="#2f4ca7" stroke-width="1.7"/><path d="M12.8 6.8L16.6 10.4" stroke="#2f4ca7" stroke-width="1.9"/></svg>
<svg style="position:absolute;left:1828px;top:452.0px;" width="16" height="12" viewBox="0 0 16 12"><path d="M0.4 5.2L6 0.4v3c5.2 0 8.6 2.6 9.6 8.2-1.8-2.6-4.8-3.4-9.6-3.4v3z" fill="#2f4ca7"/></svg>
<svg style="position:absolute;left:1869px;top:451.5px;" width="5" height="15" viewBox="0 0 5 15"><circle cx="2.3" cy="2.4" r="1.7" fill="#2f4ca7"/><circle cx="2.3" cy="7.4" r="1.7" fill="#2f4ca7"/><circle cx="2.3" cy="12.4" r="1.7" fill="#2f4ca7"/></svg>
<div style="position:absolute;left:309px;top:483px;width:1588px;height:1px;background:#e3e5e9;"></div>
<div class="t" style="right:1499px;top:501.00px;font-size:15px;line-height:15px;font-weight:400;color:#212529;text-align:right;">5619</div>
<div class="t" style="left:437.3px;top:501.00px;font-size:15px;line-height:15px;font-weight:400;color:#212529;">Prueba Notificaciones automáticas</div>
<div style="position:absolute;left:721px;top:498.0px;width:81px;height:21px;background:#dbe3f8;border:1px solid #3a54b4;border-radius:7px;box-sizing:border-box;"></div>
<div class="t" style="left:726.6px;top:502.54px;font-size:12px;line-height:12px;font-weight:700;color:#3450ad;">En progreso</div>
<div style="position:absolute;left:889px;top:498.0px;width:56px;height:21px;background:#fafbfd;border:1px solid #3a54b4;border-radius:7px;box-sizing:border-box;"></div>
<div class="t" style="left:894.6px;top:502.54px;font-size:12px;line-height:12px;font-weight:700;color:#3450ad;">Flexible</div>
<div class="t" style="left:1057.5px;top:501.00px;font-size:15px;line-height:15px;font-weight:400;color:#212529;">M. Guzman</div>
<div class="t" style="left:1425.5px;top:501.00px;font-size:15px;line-height:15px;font-weight:400;color:#212529;">2/3</div>
<div class="t" style="left:1545.6px;top:501.00px;font-size:15px;line-height:15px;font-weight:400;color:#212529;">11/02/2025</div>
<div class="t" style="left:1665.5px;top:501.00px;font-size:15px;line-height:15px;font-weight:400;color:#212529;">11/02/2025</div>
<svg style="position:absolute;left:1793px;top:503.5px;" width="18" height="12" viewBox="0 0 18 12"><rect x="0.5" y="1" width="4" height="1.6" fill="#2f4ca7"/><rect x="0.5" y="4.6" width="4" height="1.6" fill="#2f4ca7"/><rect x="0.5" y="8.4" width="7" height="1.8" fill="#2f4ca7"/><circle cx="10.5" cy="4.4" r="3.4" fill="none" stroke="#2f4ca7" stroke-width="1.7"/><path d="M12.8 6.8L16.6 10.4" stroke="#2f4ca7" stroke-width="1.9"/></svg>
<svg style="position:absolute;left:1828px;top:503.0px;" width="16" height="12" viewBox="0 0 16 12"><path d="M0.4 5.2L6 0.4v3c5.2 0 8.6 2.6 9.6 8.2-1.8-2.6-4.8-3.4-9.6-3.4v3z" fill="#2f4ca7"/></svg>
<svg style="position:absolute;left:1869px;top:502.5px;" width="5" height="15" viewBox="0 0 5 15"><circle cx="2.3" cy="2.4" r="1.7" fill="#2f4ca7"/><circle cx="2.3" cy="7.4" r="1.7" fill="#2f4ca7"/><circle cx="2.3" cy="12.4" r="1.7" fill="#2f4ca7"/></svg>
<div style="position:absolute;left:309px;top:534px;width:1588px;height:1px;background:#e3e5e9;"></div>
<div class="t" style="right:1499px;top:552.00px;font-size:15px;line-height:15px;font-weight:400;color:#212529;text-align:right;">5486</div>
<div class="t" style="left:437.3px;top:552.00px;font-size:15px;line-height:15px;font-weight:400;color:#212529;">flexible prueba</div>
<div style="position:absolute;left:721px;top:549.0px;width:81px;height:21px;background:#dbe3f8;border:1px solid #3a54b4;border-radius:7px;box-sizing:border-box;"></div>
<div class="t" style="left:726.6px;top:553.54px;font-size:12px;line-height:12px;font-weight:700;color:#3450ad;">En progreso</div>
<div style="position:absolute;left:889px;top:549.0px;width:56px;height:21px;background:#fafbfd;border:1px solid #3a54b4;border-radius:7px;box-sizing:border-box;"></div>
<div class="t" style="left:894.6px;top:553.54px;font-size:12px;line-height:12px;font-weight:700;color:#3450ad;">Flexible</div>
<div class="t" style="left:1057.5px;top:552.00px;font-size:15px;line-height:15px;font-weight:400;color:#212529;">M. Guzman</div>
<div class="t" style="left:1425.5px;top:552.00px;font-size:15px;line-height:15px;font-weight:400;color:#212529;">2/3</div>
<div class="t" style="left:1545.6px;top:552.00px;font-size:15px;line-height:15px;font-weight:400;color:#212529;">07/02/2025</div>
<div class="t" style="left:1665.5px;top:552.00px;font-size:15px;line-height:15px;font-weight:400;color:#212529;">07/02/2025</div>
<svg style="position:absolute;left:1793px;top:554.5px;" width="18" height="12" viewBox="0 0 18 12"><rect x="0.5" y="1" width="4" height="1.6" fill="#2f4ca7"/><rect x="0.5" y="4.6" width="4" height="1.6" fill="#2f4ca7"/><rect x="0.5" y="8.4" width="7" height="1.8" fill="#2f4ca7"/><circle cx="10.5" cy="4.4" r="3.4" fill="none" stroke="#2f4ca7" stroke-width="1.7"/><path d="M12.8 6.8L16.6 10.4" stroke="#2f4ca7" stroke-width="1.9"/></svg>
<svg style="position:absolute;left:1828px;top:554.0px;" width="16" height="12" viewBox="0 0 16 12"><path d="M0.4 5.2L6 0.4v3c5.2 0 8.6 2.6 9.6 8.2-1.8-2.6-4.8-3.4-9.6-3.4v3z" fill="#2f4ca7"/></svg>
<svg style="position:absolute;left:1869px;top:553.5px;" width="5" height="15" viewBox="0 0 5 15"><circle cx="2.3" cy="2.4" r="1.7" fill="#2f4ca7"/><circle cx="2.3" cy="7.4" r="1.7" fill="#2f4ca7"/><circle cx="2.3" cy="12.4" r="1.7" fill="#2f4ca7"/></svg>
<div style="position:absolute;left:309px;top:585px;width:1588px;height:1px;background:#e3e5e9;"></div>
<div class="t" style="right:1499px;top:605.50px;font-size:15px;line-height:15px;font-weight:400;color:#212529;text-align:right;">5385</div>
<div class="t" style="left:437.3px;top:605.50px;font-size:15px;line-height:15px;font-weight:400;color:#212529;">FLO - Flujo Documentos</div>
<div style="position:absolute;left:721px;top:602.5px;width:81px;height:21px;background:#dbe3f8;border:1px solid #3a54b4;border-radius:7px;box-sizing:border-box;"></div>
<div class="t" style="left:726.6px;top:607.04px;font-size:12px;line-height:12px;font-weight:700;color:#3450ad;">En progreso</div>
<div style="position:absolute;left:889px;top:602.5px;width:56px;height:21px;background:#fafbfd;border:1px solid #3a54b4;border-radius:7px;box-sizing:border-box;"></div>
<div class="t" style="left:894.6px;top:607.04px;font-size:12px;line-height:12px;font-weight:700;color:#3450ad;">Flexible</div>
<div class="t" style="left:1057.5px;top:605.50px;font-size:15px;line-height:15px;font-weight:400;color:#212529;">S. Piza</div>
<div class="t" style="left:1177.8px;top:595.70px;font-size:15px;line-height:15px;font-weight:400;color:#212529;">Sebastían Piza</div>
<div class="t" style="left:1177.8px;top:615.30px;font-size:15px;line-height:15px;font-weight:400;color:#212529;">Lería</div>
<div class="t" style="left:1305.5px;top:605.50px;font-size:15px;line-height:15px;font-weight:400;color:#212529;">16.935.413-8</div>
<div class="t" style="left:1425.5px;top:605.50px;font-size:15px;line-height:15px;font-weight:400;color:#212529;">2/3</div>
<div class="t" style="left:1545.6px;top:605.50px;font-size:15px;line-height:15px;font-weight:400;color:#212529;">03/02/2025</div>
<div class="t" style="left:1665.5px;top:605.50px;font-size:15px;line-height:15px;font-weight:400;color:#212529;">03/02/2025</div>
<svg style="position:absolute;left:1793px;top:608.0px;" width="18" height="12" viewBox="0 0 18 12"><rect x="0.5" y="1" width="4" height="1.6" fill="#2f4ca7"/><rect x="0.5" y="4.6" width="4" height="1.6" fill="#2f4ca7"/><rect x="0.5" y="8.4" width="7" height="1.8" fill="#2f4ca7"/><circle cx="10.5" cy="4.4" r="3.4" fill="none" stroke="#2f4ca7" stroke-width="1.7"/><path d="M12.8 6.8L16.6 10.4" stroke="#2f4ca7" stroke-width="1.9"/></svg>
<svg style="position:absolute;left:1828px;top:607.5px;" width="16" height="12" viewBox="0 0 16 12"><path d="M0.4 5.2L6 0.4v3c5.2 0 8.6 2.6 9.6 8.2-1.8-2.6-4.8-3.4-9.6-3.4v3z" fill="#2f4ca7"/></svg>
<svg style="position:absolute;left:1869px;top:607.0px;" width="5" height="15" viewBox="0 0 5 15"><circle cx="2.3" cy="2.4" r="1.7" fill="#2f4ca7"/><circle cx="2.3" cy="7.4" r="1.7" fill="#2f4ca7"/><circle cx="2.3" cy="12.4" r="1.7" fill="#2f4ca7"/></svg>
<div style="position:absolute;left:309px;top:641px;width:1588px;height:1px;background:#e3e5e9;"></div>
<div class="t" style="right:1499px;top:671.50px;font-size:15px;line-height:15px;font-weight:400;color:#212529;text-align:right;">5284</div>
<div class="t" style="left:437.3px;top:651.90px;font-size:15px;line-height:15px;font-weight:400;color:#212529;">mov area/cargo: Jorge Alonso - Franco</div>
<div class="t" style="left:437.3px;top:671.50px;font-size:15px;line-height:15px;font-weight:400;color:#212529;">Compañia Ltda - Gerencia Comercial -</div>
<div class="t" style="left:437.3px;top:691.10px;font-size:15px;line-height:15px;font-weight:400;color:#212529;">Ventas</div>
<div style="position:absolute;left:721px;top:668.5px;width:81px;height:21px;background:#dbe3f8;border:1px solid #3a54b4;border-radius:7px;box-sizing:border-box;"></div>
<div class="t" style="left:726.6px;top:673.04px;font-size:12px;line-height:12px;font-weight:700;color:#3450ad;">En progreso</div>
<div style="position:absolute;left:889px;top:668.5px;width:79px;height:21px;background:#fafbfd;border:1px solid #3a54b4;border-radius:7px;box-sizing:border-box;"></div>
<div class="t" style="left:894.6px;top:673.04px;font-size:12px;line-height:12px;font-weight:700;color:#3450ad;">Movimiento</div>
<div class="t" style="left:1057.5px;top:671.50px;font-size:15px;line-height:15px;font-weight:400;color:#212529;">A. Malianni</div>
<div class="t" style="left:1177.8px;top:661.70px;font-size:15px;line-height:15px;font-weight:400;color:#212529;">Jorge Alonso</div>
<div class="t" style="left:1177.8px;top:681.30px;font-size:15px;line-height:15px;font-weight:400;color:#212529;">Alonso</div>
<div class="t" style="left:1305.5px;top:671.50px;font-size:15px;line-height:15px;font-weight:400;color:#212529;">17.324.697-8</div>
<div class="t" style="left:1425.5px;top:671.50px;font-size:15px;line-height:15px;font-weight:400;color:#212529;">2/3</div>
<div class="t" style="left:1545.6px;top:671.50px;font-size:15px;line-height:15px;font-weight:400;color:#212529;">30/01/2025</div>
<div class="t" style="left:1665.5px;top:671.50px;font-size:15px;line-height:15px;font-weight:400;color:#212529;">30/01/2025</div>
<svg style="position:absolute;left:1793px;top:674.0px;" width="18" height="12" viewBox="0 0 18 12"><rect x="0.5" y="1" width="4" height="1.6" fill="#2f4ca7"/><rect x="0.5" y="4.6" width="4" height="1.6" fill="#2f4ca7"/><rect x="0.5" y="8.4" width="7" height="1.8" fill="#2f4ca7"/><circle cx="10.5" cy="4.4" r="3.4" fill="none" stroke="#2f4ca7" stroke-width="1.7"/><path d="M12.8 6.8L16.6 10.4" stroke="#2f4ca7" stroke-width="1.9"/></svg>
<svg style="position:absolute;left:1828px;top:673.5px;" width="16" height="12" viewBox="0 0 16 12"><path d="M0.4 5.2L6 0.4v3c5.2 0 8.6 2.6 9.6 8.2-1.8-2.6-4.8-3.4-9.6-3.4v3z" fill="#2f4ca7"/></svg>
<svg style="position:absolute;left:1869px;top:673.0px;" width="5" height="15" viewBox="0 0 5 15"><circle cx="2.3" cy="2.4" r="1.7" fill="#2f4ca7"/><circle cx="2.3" cy="7.4" r="1.7" fill="#2f4ca7"/><circle cx="2.3" cy="12.4" r="1.7" fill="#2f4ca7"/></svg>
<div style="position:absolute;left:309px;top:717px;width:1588px;height:1px;background:#e3e5e9;"></div>
<div class="t" style="right:1499px;top:737.50px;font-size:15px;line-height:15px;font-weight:400;color:#212529;text-align:right;">5215</div>
<div class="t" style="left:437.3px;top:727.70px;font-size:15px;line-height:15px;font-weight:400;color:#212529;">mov area/cargo: Giovi Aleman - Con</div>
<div class="t" style="left:437.3px;top:747.30px;font-size:15px;line-height:15px;font-weight:400;color:#212529;">tador General - Constructora Ferre...<span style="color:#3a55b5;margin-left:3px">más</span></div>
<div style="position:absolute;left:721px;top:734.5px;width:81px;height:21px;background:#dbe3f8;border:1px solid #3a54b4;border-radius:7px;box-sizing:border-box;"></div>
<div class="t" style="left:726.6px;top:739.04px;font-size:12px;line-height:12px;font-weight:700;color:#3450ad;">En progreso</div>
<div style="position:absolute;left:889px;top:734.5px;width:79px;height:21px;background:#fafbfd;border:1px solid #3a54b4;border-radius:7px;box-sizing:border-box;"></div>
<div class="t" style="left:894.6px;top:739.04px;font-size:12px;line-height:12px;font-weight:700;color:#3450ad;">Movimiento</div>
<div class="t" style="left:1057.5px;top:737.50px;font-size:15px;line-height:15px;font-weight:400;color:#212529;">A. Malianni</div>
<div class="t" style="left:1177.8px;top:737.50px;font-size:15px;line-height:15px;font-weight:400;color:#212529;">Giovi Aleman</div>
<div class="t" style="left:1305.5px;top:737.50px;font-size:15px;line-height:15px;font-weight:400;color:#212529;">123</div>
<div class="t" style="left:1425.5px;top:737.50px;font-size:15px;line-height:15px;font-weight:400;color:#212529;">2/3</div>
<div class="t" style="left:1545.6px;top:737.50px;font-size:15px;line-height:15px;font-weight:400;color:#212529;">28/01/2025</div>
<div class="t" style="left:1665.5px;top:737.50px;font-size:15px;line-height:15px;font-weight:400;color:#212529;">28/01/2025</div>
<svg style="position:absolute;left:1793px;top:740.0px;" width="18" height="12" viewBox="0 0 18 12"><rect x="0.5" y="1" width="4" height="1.6" fill="#2f4ca7"/><rect x="0.5" y="4.6" width="4" height="1.6" fill="#2f4ca7"/><rect x="0.5" y="8.4" width="7" height="1.8" fill="#2f4ca7"/><circle cx="10.5" cy="4.4" r="3.4" fill="none" stroke="#2f4ca7" stroke-width="1.7"/><path d="M12.8 6.8L16.6 10.4" stroke="#2f4ca7" stroke-width="1.9"/></svg>
<svg style="position:absolute;left:1828px;top:739.5px;" width="16" height="12" viewBox="0 0 16 12"><path d="M0.4 5.2L6 0.4v3c5.2 0 8.6 2.6 9.6 8.2-1.8-2.6-4.8-3.4-9.6-3.4v3z" fill="#2f4ca7"/></svg>
<svg style="position:absolute;left:1869px;top:739.0px;" width="5" height="15" viewBox="0 0 5 15"><circle cx="2.3" cy="2.4" r="1.7" fill="#2f4ca7"/><circle cx="2.3" cy="7.4" r="1.7" fill="#2f4ca7"/><circle cx="2.3" cy="12.4" r="1.7" fill="#2f4ca7"/></svg>
<div style="position:absolute;left:309px;top:773px;width:1588px;height:1px;background:#e3e5e9;"></div>
<div class="t" style="right:1499px;top:791.00px;font-size:15px;line-height:15px;font-weight:400;color:#212529;text-align:right;">5179</div>
<div class="t" style="left:437.3px;top:791.00px;font-size:15px;line-height:15px;font-weight:400;color:#212529;">Prueba notificacion alta JJ</div>
<div style="position:absolute;left:721px;top:788.0px;width:81px;height:21px;background:#dbe3f8;border:1px solid #3a54b4;border-radius:7px;box-sizing:border-box;"></div>
<div class="t" style="left:726.6px;top:792.54px;font-size:12px;line-height:12px;font-weight:700;color:#3450ad;">En progreso</div>
<div style="position:absolute;left:889px;top:788.0px;width:34px;height:21px;background:#fafbfd;border:1px solid #3a54b4;border-radius:7px;box-sizing:border-box;"></div>
<div class="t" style="left:894.6px;top:792.54px;font-size:12px;line-height:12px;font-weight:700;color:#3450ad;">Alta</div>
<div class="t" style="left:1057.5px;top:791.00px;font-size:15px;line-height:15px;font-weight:400;color:#212529;">JuanJo</div>
<div class="t" style="left:1425.5px;top:791.00px;font-size:15px;line-height:15px;font-weight:400;color:#212529;">1/3</div>
<div class="t" style="left:1545.6px;top:791.00px;font-size:15px;line-height:15px;font-weight:400;color:#212529;">21/01/2025</div>
<div class="t" style="left:1665.5px;top:791.00px;font-size:15px;line-height:15px;font-weight:400;color:#212529;">21/01/2025</div>
<svg style="position:absolute;left:1793px;top:793.5px;" width="18" height="12" viewBox="0 0 18 12"><rect x="0.5" y="1" width="4" height="1.6" fill="#2f4ca7"/><rect x="0.5" y="4.6" width="4" height="1.6" fill="#2f4ca7"/><rect x="0.5" y="8.4" width="7" height="1.8" fill="#2f4ca7"/><circle cx="10.5" cy="4.4" r="3.4" fill="none" stroke="#2f4ca7" stroke-width="1.7"/><path d="M12.8 6.8L16.6 10.4" stroke="#2f4ca7" stroke-width="1.9"/></svg>
<svg style="position:absolute;left:1828px;top:793.0px;" width="16" height="12" viewBox="0 0 16 12"><path d="M0.4 5.2L6 0.4v3c5.2 0 8.6 2.6 9.6 8.2-1.8-2.6-4.8-3.4-9.6-3.4v3z" fill="#2f4ca7"/></svg>
<svg style="position:absolute;left:1869px;top:792.5px;" width="5" height="15" viewBox="0 0 5 15"><circle cx="2.3" cy="2.4" r="1.7" fill="#2f4ca7"/><circle cx="2.3" cy="7.4" r="1.7" fill="#2f4ca7"/><circle cx="2.3" cy="12.4" r="1.7" fill="#2f4ca7"/></svg>
<div style="position:absolute;left:309px;top:824px;width:1588px;height:1px;background:#e3e5e9;"></div>
<div class="t" style="right:1499px;top:844.50px;font-size:15px;line-height:15px;font-weight:400;color:#212529;text-align:right;">5177</div>
<div class="t" style="left:437.3px;top:834.70px;font-size:15px;line-height:15px;font-weight:400;color:#212529;">Prueba notificacion alta JJ: Asdasd</div>
<div class="t" style="left:437.3px;top:854.30px;font-size:15px;line-height:15px;font-weight:400;color:#212529;">Asfasdas - Gerente Operaciones - ...<span style="color:#3a55b5">más</span></div>
<div style="position:absolute;left:721px;top:841.5px;width:81px;height:21px;background:#dbe3f8;border:1px solid #3a54b4;border-radius:7px;box-sizing:border-box;"></div>
<div class="t" style="left:726.6px;top:846.04px;font-size:12px;line-height:12px;font-weight:700;color:#3450ad;">En progreso</div>
<div style="position:absolute;left:889px;top:841.5px;width:34px;height:21px;background:#fafbfd;border:1px solid #3a54b4;border-radius:7px;box-sizing:border-box;"></div>
<div class="t" style="left:894.6px;top:846.04px;font-size:12px;line-height:12px;font-weight:700;color:#3450ad;">Alta</div>
<div class="t" style="left:1057.5px;top:844.50px;font-size:15px;line-height:15px;font-weight:400;color:#212529;">JuanJo</div>
<div class="t" style="left:1177.8px;top:834.70px;font-size:15px;line-height:15px;font-weight:400;color:#212529;">Asdasd</div>
<div class="t" style="left:1177.8px;top:854.30px;font-size:15px;line-height:15px;font-weight:400;color:#212529;">Asfasdas</div>
<div class="t" style="left:1425.5px;top:844.50px;font-size:15px;line-height:15px;font-weight:400;color:#212529;">2/3</div>
<div class="t" style="left:1545.6px;top:844.50px;font-size:15px;line-height:15px;font-weight:400;color:#212529;">21/01/2025</div>
<div class="t" style="left:1665.5px;top:844.50px;font-size:15px;line-height:15px;font-weight:400;color:#212529;">21/01/2025</div>
<svg style="position:absolute;left:1793px;top:847.0px;" width="18" height="12" viewBox="0 0 18 12"><rect x="0.5" y="1" width="4" height="1.6" fill="#2f4ca7"/><rect x="0.5" y="4.6" width="4" height="1.6" fill="#2f4ca7"/><rect x="0.5" y="8.4" width="7" height="1.8" fill="#2f4ca7"/><circle cx="10.5" cy="4.4" r="3.4" fill="none" stroke="#2f4ca7" stroke-width="1.7"/><path d="M12.8 6.8L16.6 10.4" stroke="#2f4ca7" stroke-width="1.9"/></svg>
<svg style="position:absolute;left:1828px;top:846.5px;" width="16" height="12" viewBox="0 0 16 12"><path d="M0.4 5.2L6 0.4v3c5.2 0 8.6 2.6 9.6 8.2-1.8-2.6-4.8-3.4-9.6-3.4v3z" fill="#2f4ca7"/></svg>
<svg style="position:absolute;left:1869px;top:846.0px;" width="5" height="15" viewBox="0 0 5 15"><circle cx="2.3" cy="2.4" r="1.7" fill="#2f4ca7"/><circle cx="2.3" cy="7.4" r="1.7" fill="#2f4ca7"/><circle cx="2.3" cy="12.4" r="1.7" fill="#2f4ca7"/></svg>
<div style="position:absolute;left:309px;top:880px;width:1588px;height:1px;background:#e3e5e9;"></div>
<div class="t" style="right:1499px;top:910.50px;font-size:15px;line-height:15px;font-weight:400;color:#212529;text-align:right;">5104</div>
<div class="t" style="left:437.3px;top:890.90px;font-size:15px;line-height:15px;font-weight:400;color:#212529;">mov area/cargo: Encargado de RRHH -</div>
<div class="t" style="left:437.3px;top:910.50px;font-size:15px;line-height:15px;font-weight:400;color:#212529;">Constructora Ferretería - Gerencia</div>
<div class="t" style="left:437.3px;top:930.10px;font-size:15px;line-height:15px;font-weight:400;color:#212529;">Ventas</div>
<div style="position:absolute;left:721px;top:907.5px;width:81px;height:21px;background:#dbe3f8;border:1px solid #3a54b4;border-radius:7px;box-sizing:border-box;"></div>
<div class="t" style="left:726.6px;top:912.04px;font-size:12px;line-height:12px;font-weight:700;color:#3450ad;">En progreso</div>
<div style="position:absolute;left:889px;top:907.5px;width:79px;height:21px;background:#fafbfd;border:1px solid #3a54b4;border-radius:7px;box-sizing:border-box;"></div>
<div class="t" style="left:894.6px;top:912.04px;font-size:12px;line-height:12px;font-weight:700;color:#3450ad;">Movimiento</div>
<div class="t" style="left:1057.5px;top:910.50px;font-size:15px;line-height:15px;font-weight:400;color:#212529;">A. Malianni</div>
<div class="t" style="left:1425.5px;top:910.50px;font-size:15px;line-height:15px;font-weight:400;color:#212529;">2/3</div>
<div class="t" style="left:1545.6px;top:910.50px;font-size:15px;line-height:15px;font-weight:400;color:#212529;">15/01/2025</div>
<div class="t" style="left:1665.5px;top:910.50px;font-size:15px;line-height:15px;font-weight:400;color:#212529;">15/01/2025</div>
<svg style="position:absolute;left:1793px;top:913.0px;" width="18" height="12" viewBox="0 0 18 12"><rect x="0.5" y="1" width="4" height="1.6" fill="#2f4ca7"/><rect x="0.5" y="4.6" width="4" height="1.6" fill="#2f4ca7"/><rect x="0.5" y="8.4" width="7" height="1.8" fill="#2f4ca7"/><circle cx="10.5" cy="4.4" r="3.4" fill="none" stroke="#2f4ca7" stroke-width="1.7"/><path d="M12.8 6.8L16.6 10.4" stroke="#2f4ca7" stroke-width="1.9"/></svg>
<svg style="position:absolute;left:1828px;top:912.5px;" width="16" height="12" viewBox="0 0 16 12"><path d="M0.4 5.2L6 0.4v3c5.2 0 8.6 2.6 9.6 8.2-1.8-2.6-4.8-3.4-9.6-3.4v3z" fill="#2f4ca7"/></svg>
<svg style="position:absolute;left:1869px;top:912.0px;" width="5" height="15" viewBox="0 0 5 15"><circle cx="2.3" cy="2.4" r="1.7" fill="#2f4ca7"/><circle cx="2.3" cy="7.4" r="1.7" fill="#2f4ca7"/><circle cx="2.3" cy="12.4" r="1.7" fill="#2f4ca7"/></svg>
<div style="position:absolute;left:309px;top:956px;width:1588px;height:1px;background:#e3e5e9;"></div>
<svg style="position:absolute;left:876px;top:108px;" width="36" height="36" viewBox="0 0 36 36"><path d="M12 8.8V23.2L15.4 20 18.4 28.9 21.6 27.7 18.6 19.2 22.4 18.9Z" fill="#fff" stroke="#fff" stroke-width="2" stroke-linejoin="round"/><path d="M12 8.8V23.2L15.4 20 18.4 28.9 21.6 27.7 18.6 19.2 22.4 18.9Z" fill="#000"/></svg>
<div style="position:absolute;left:1864px;top:856px;width:40px;height:40px;background:#2f4ca7;border-radius:50%;box-shadow:0 1px 5px rgba(47,76,167,0.35);"></div>
<svg style="position:absolute;left:1876px;top:871px;" width="16" height="12" viewBox="0 0 16 12"><rect x="1" y="1" width="14" height="6.6" rx="3.3" fill="#fff"/><path d="M9.6 7.4L12.2 7.4 12 9.6z" fill="#fff"/></svg>
<div style="position:absolute;left:1914px;top:60px;width:6px;height:851px;background:#e6e9f2;"></div>
<div style="position:absolute;left:1914px;top:60px;width:6px;height:411px;background:#c1c1c1;border-radius:0 0 3px 3px;"></div>
</body></html>
